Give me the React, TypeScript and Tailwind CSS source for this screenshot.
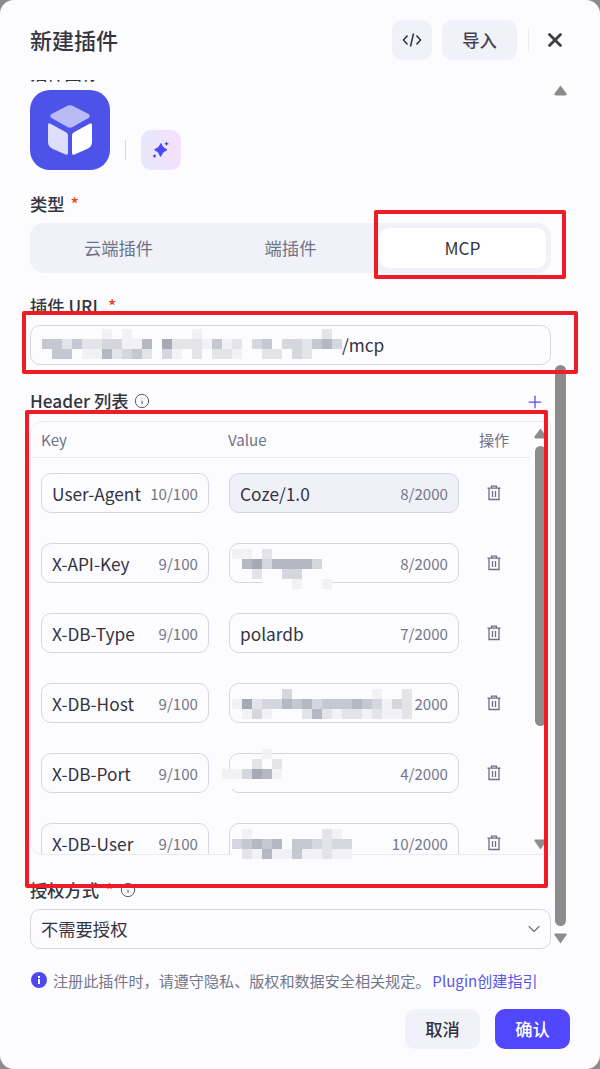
import { ChevronDown, Info, Plus, X } from "lucide-react";

const shades: Record<string, string> = {
  a: "#a7aab5",
  b: "#b5b8c2",
  c: "#c6c8d1",
  d: "#d5d6de",
  e: "#e3e4ea",
  f: "#f1f1f6",
  w: "#fcfcff",
};

const mosaics: { x: number; y: number; rows: string[] }[] = [
  {
    x: 42,
    y: 329,
    rows: [
      "......f.f......f............e.",
      "cceceeddffbwaeeefcfewdcwddecbd",
      "wccwffbedcewdfweweefwweewdew..",
    ],
  },
  {
    x: 232,
    y: 549,
    rows: ["ff.e.......", ".badbbbbd..", "..e..dd....", "...wwwfwwf."],
  },
  {
    x: 232,
    y: 689,
    rows: [
      ".....d........f..e",
      "faeddbcbdcccbcdfde",
      "wfdfwwwebefeefeffe",
    ],
  },
  {
    x: 222,
    y: 749,
    rows: ["....f.", "...ewe", "ffdabf", "ww...."],
  },
  {
    x: 232,
    y: 829,
    rows: [".f.......ef..", "dcbcbwccdedd.", "wefbffcffeff."],
  },
];

const rows = [
  { k: "User-Agent", kc: "10/100", v: "Coze/1.0", vc: "8/2000", filled: true },
  { k: "X-API-Key", kc: "9/100", v: "", vc: "8/2000" },
  { k: "X-DB-Type", kc: "9/100", v: "polardb", vc: "7/2000" },
  { k: "X-DB-Host", kc: "9/100", v: "", vc: "2000" },
  { k: "X-DB-Port", kc: "9/100", v: "", vc: "4/2000" },
  { k: "X-DB-User", kc: "9/100", v: "", vc: "10/2000" },
];

function Trash() {
  return (
    <svg width="16" height="16" viewBox="0 0 16 16" fill="none" stroke="#6b6e85" strokeWidth="1.3">
      <path d="M1.5 3.2h13M5.5 3V1.2h5V3M3 3.2v11.3h10V3.2M6.5 6v6M9.5 6v6" />
    </svg>
  );
}

function Up() {
  return (
    <svg width="13" height="11" viewBox="0 0 13 11">
      <path d="M6.5 0.5L12.5 8.5Q13 10.5 11 10.5H2Q0 10.5 0.5 8.5Z" fill="#8c8c8c" />
    </svg>
  );
}

function Down() {
  return (
    <svg width="13" height="11" viewBox="0 0 13 11">
      <path d="M1 0.5H12Q13 .5 12.5 2L6.5 10.5L0.5 2Q0 .5 1 .5Z" fill="#8c8c8c" />
    </svg>
  );
}

function Label({ text, info, cls }: { text: string; info?: boolean; cls: string }) {
  return (
    <div className={`flex items-center h-[22px] text-[17.3px] font-medium text-[#35353f] ${cls}`}>
      <span>{text}</span>
      <span className="ml-[6px] text-[#f0401e]">*</span>
      {info && <Info size={16} strokeWidth={1.4} className="ml-[6px] text-[#4d4f5e]" />}
    </div>
  );
}

export default function App() {
  return (
    <div
      className="relative w-[600px] h-[1069px] overflow-hidden bg-[#8c8c8c]"
      style={{ fontFamily: '"Noto Sans CJK SC", "Noto Sans", sans-serif' }}
    >
      <div className="flex flex-col h-full rounded-[14px] bg-[#fcfcff]">
        {/* Header */}
        <div className="flex items-center h-[80px] shrink-0 pl-[30px] pr-[34px]">
          <h1 className="-mt-[2px] text-[22px] font-medium text-[#35353f]">新建插件</h1>
          <div className="ml-auto flex items-center">
            <button className="flex items-center justify-center w-[40px] h-[40px] rounded-[10px] bg-[#f1f2f9]">
              <svg width="20" height="20" viewBox="0 0 20 20" fill="none" stroke="#30303a" strokeWidth="1.5">
                <path d="M5.5 5.5L1.5 10l4 4.5M14.500 5.5l4 4.500-4 4.500M11.500 3.500l-3 13" />
              </svg>
            </button>
            <button className="ml-[10px] w-[75px] h-[40px] rounded-[10px] bg-[#f1f2f9] text-[17.3px] font-medium text-[#44444f]">
              导入
            </button>
            <div className="ml-[11px] w-px h-[24px] bg-[#ebecf2]" />
            <X size={22} strokeWidth={3} className="ml-[15px] text-[#3d3d47]" />
          </div>
        </div>

        {/* Scrolling body */}
        <div className="h-[870px] shrink-0 overflow-hidden pl-[30px] pr-[49px]">
          <Label text="插件图标" cls="-mt-[18px]" />
          <div className="mt-[6px] flex items-center">
            <div className="flex items-center justify-center w-[80px] h-[80px] rounded-[20px] bg-[#4d53e8]">
              <svg width="44" height="50" viewBox="0 0 44 50" className="-mt-[1px]">
                <path d="M19 1Q22 -.5 25 1L40.500 9Q43 11 40.500 13L24.500 22Q22 23.500 19.500 22L3.500 13Q1 11 3.500 9Z" fill="#b8bbf6" />
                <path d="M0 20Q0 17.500 2 18.500L18.500 27.500Q20 28.500 20 30.500V48Q20 50.500 17.500 49.500L5 44Q0 42 0 37Z" fill="#dcdefb" />
                <path d="M44 20Q44 17.500 42 18.500L25.500 27.500Q24 28.500 24 30.500V48Q24 50.500 26.500 49.500L39 44Q44 42 44 37Z" fill="#ffffff" />
              </svg>
            </div>
            <div className="self-end mb-[10px] ml-[15px] w-px h-[20px] bg-[#d5d6e2]" />
            <button className="self-end ml-[15px] flex items-center justify-center w-[40px] h-[40px] rounded-[10px] bg-gradient-to-r from-[#e6e7fd] to-[#f5e0fd]">
              <svg width="18" height="18" viewBox="0 0 18 18" fill="#4d47f0">
                <path d="M9 2.500Q10 7 15 8.800Q10 10.500 8.500 15.500Q7.500 10.500 2.500 8.800Q7.500 7 9 2.500Z" stroke="#4d47f0" strokeWidth="1" strokeLinejoin="round" />
                <path d="M14.500 0.500Q15 2.300 16.800 2.800Q15 3.300 14.500 5Q14 3.300 12.200 2.800Q14 2.300 14.500 .5Z" />
                <path d="M2.500 13Q3 14.500 4.500 15Q3 15.500 2.500 17Q2 15.500 .5 15Q2 14.500 2.500 13Z" />
              </svg>
            </button>
          </div>

          <Label text="类型" cls="mt-[23px]" />
          <div className="mt-[8px] grid grid-cols-3 gap-[5px] h-[50px] p-[5px] rounded-[14px] bg-[#f1f2f9] text-[17.3px]">
            <div className="flex items-center justify-center text-[#6f7285]">云端插件</div>
            <div className="flex items-center justify-center text-[#6f7285]">端插件</div>
            <div className="flex items-center justify-center rounded-[10px] bg-white text-[#35353f]">MCP</div>
          </div>

          <Label text="插件 URL" cls="mt-[22px]" />
          <div className="mt-[8px] flex items-center h-[40px] pl-[311px] rounded-[10px] border border-[#d5d6e4] text-[17.3px] text-[#33333f]">
            /mcp
          </div>

          <div className="mt-[25px] flex items-center h-[22px] text-[17.3px] font-medium text-[#35353f]">
            <span>Header 列表</span>
            <Info size={16} strokeWidth={1.4} className="ml-[6px] text-[#4d4f5e]" />
            <Plus size={20} strokeWidth={1.5} className="ml-auto mr-[6px] mt-[1px] text-[#4f4cf0]" />
          </div>

          {/* Table */}
          <div className="relative mt-[9px] h-[434px] overflow-hidden rounded-l-[12px] rounded-tr-[4px] border border-[#e9eaf2]">
            <div className="flex items-center w-[500px] h-[36px] pl-[10px] border-b border-[#e9eaf2] text-[15.1px] text-[#6f7285]">
              <div className="w-[187px] shrink-0">Key</div>
              <div className="w-[251px] shrink-0">Value</div>
              <div className="w-[40px] shrink-0">操作</div>
            </div>
            <div className="flex flex-col gap-[30px] pt-[15px] pl-[10px]">
              {rows.map((r) => (
                <div key={r.k} className="flex items-center shrink-0">
                  <div className="flex items-center w-[168px] h-[40px] pl-[10px] pr-[10px] rounded-[10px] border border-[#d5d6e4]">
                    <span className="flex-1 min-w-0 overflow-hidden whitespace-nowrap text-[17.3px] leading-[24px] mt-[2px] text-[#33333f]">{r.k}</span>
                    <span className="ml-[9px] shrink-0 text-[15.1px] text-[#737689]">{r.kc}</span>
                  </div>
                  <div className={`ml-[20px] flex items-center w-[230px] h-[40px] pl-[10px] pr-[10px] rounded-[10px] border border-[#d5d6e4] ${r.filled ? "bg-[#f0f1f8]" : ""}`}>
                    <span className="flex-1 text-[17.3px] leading-[24px] mt-[2px] text-[#33333f]">{r.v}</span>
                    <span className="text-[15.1px] text-[#737689]">{r.vc}</span>
                  </div>
                  <div className="flex justify-center w-[70px]">
                    <Trash />
                  </div>
                </div>
              ))}
            </div>
            {/* Inner scrollbar */}
            <div className="absolute top-[6px] right-[4px] bottom-[4px] w-[11px] flex flex-col items-center">
              <Up />
              <div className="mt-[7px] w-full h-[280px] rounded-[6px] bg-[#8c8c8c]" />
              <div className="mt-auto">
                <Down />
              </div>
            </div>
          </div>

          <Label text="授权方式" info cls="mt-[24px]" />
          <div className="mt-[8px] flex items-center justify-between h-[40px] pl-[10px] pr-[6px] rounded-[10px] border border-[#d5d6e4] text-[17.3px] text-[#33333f]">
            <span>不需要授权</span>
            <ChevronDown size={20} strokeWidth={1.3} className="text-[#6b6e85]" />
          </div>
        </div>

        {/* Notice */}
        <div className="mt-[20px] flex items-center h-[20px] pl-[31px] text-[15.1px] text-[#737689]">
          <svg width="16" height="16" viewBox="0 0 16 16" className="shrink-0">
            <circle cx="8" cy="8" r="8" fill="#4f47f0" />
            <rect x="7" y="7" width="2" height="5" fill="#fff" />
            <rect x="7" y="4" width="2" height="2" fill="#fff" />
          </svg>
          <span className="ml-[6px] whitespace-nowrap">注册此插件时，请遵守隐私、版权和数据安全相关规定。</span>
          <a className="ml-[2px] whitespace-nowrap text-[#5856e8]">Plugin创建指引</a>
        </div>

        {/* Footer */}
        <div className="mt-[19px] flex justify-end gap-[15px] pr-[30px]">
          <button className="w-[75px] h-[40px] rounded-[10px] bg-[#f1f2f9] text-[17.3px] font-medium text-[#33333f]">取消</button>
          <button className="w-[75px] h-[40px] rounded-[10px] bg-[#5147ff] text-[17.3px] font-medium text-white">确认</button>
        </div>
      </div>

      {/* Outer scrollbar */}
      <div className="absolute left-[555px] top-[85px] bottom-[125px] w-[11px] flex flex-col items-center">
        <Up />
        <div className="mt-[269px] w-full h-[561px] rounded-[6px] bg-[#8c8c8c]" />
        <div className="mt-auto">
          <Down />
        </div>
      </div>

      {/* Pixelated redaction of the private values */}
      <svg className="absolute inset-0 w-[600px] h-[1069px] pointer-events-none" viewBox="0 0 600 1069">
        {mosaics.map((m, mi) =>
          m.rows.map((row, ri) =>
            row.split("").map((c, ci) =>
              c === "." ? null : (
                <rect key={`${mi}-${ri}-${ci}`} x={m.x + ci * 10} y={m.y + ri * 10} width="10" height="10" fill={shades[c]} />
              ),
            ),
          ),
        )}
      </svg>

      {/* Red annotation boxes */}
      <div className="absolute left-[374px] top-[210px] w-[192px] h-[69px] border-[4px] border-[#ee1c25] rounded-[2px]" />
      <div className="absolute left-[22px] top-[311px] w-[556px] h-[63px] border-[4px] border-[#ee1c25] rounded-[2px]" />
      <div className="absolute left-[25px] top-[410px] w-[523px] h-[478px] border-[4px] border-[#ee1c25] rounded-[2px]" />
    </div>
  );
}
